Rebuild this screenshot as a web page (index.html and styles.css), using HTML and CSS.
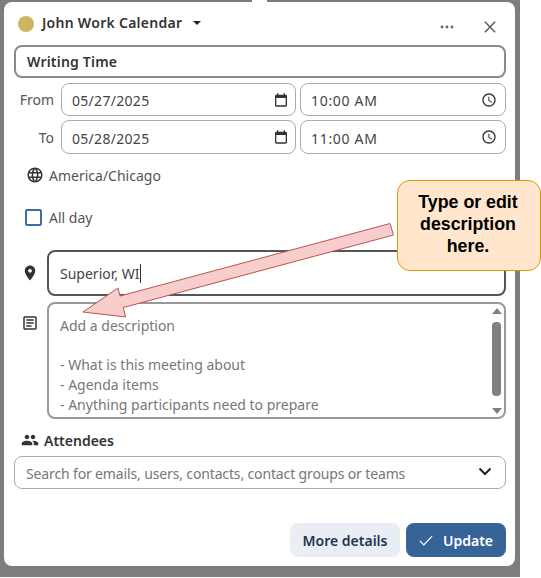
FILE: index.html
```html
<!DOCTYPE html>
<html lang="en">
<head>
  <meta charset="UTF-8" />
  <title>Edit Event</title>
  <link rel="stylesheet" href="styles.css">
</head>
<body>
  <div class="backdrop">
    <div class="beak"></div>

    <div class="panel">
      <header class="panel-head">
        <span class="cal-dot"></span>
        <span class="cal-name">John Work Calendar</span>
        <span class="caret"></span>
        <span class="head-actions">
          <svg class="more-icon" viewBox="0 0 14 4"><circle cx="2" cy="2" r="1.4"/><circle cx="7" cy="2" r="1.4"/><circle cx="12" cy="2" r="1.4"/></svg>
          <svg class="close-icon" viewBox="0 0 14 14"><path d="M1 1l12 12M13 1L1 13"/></svg>
        </span>
      </header>

      <div class="field field-title">Writing Time</div>

      <div class="date-row">
        <span class="date-label">From</span>
        <div class="field field-date">05/27/2025
          <svg class="icon" viewBox="0 0 24 24"><path d="M19 4h-1V2h-2v2H8V2H6v2H5c-1.1 0-2 .9-2 2v14c0 1.1.9 2 2 2h14c1.1 0 2-.9 2-2V6c0-1.1-.9-2-2-2zm0 16H5V9h14v11z"/></svg>
        </div>
        <div class="field field-time">10:00 AM
          <svg class="icon" viewBox="0 0 24 24"><path d="M11.99 2C6.47 2 2 6.48 2 12s4.47 10 9.99 10C17.52 22 22 17.52 22 12S17.52 2 11.99 2zM12 20c-4.42 0-8-3.58-8-8s3.58-8 8-8 8 3.58 8 8-3.58 8-8 8zm.5-13H11v6l5.25 3.15.75-1.23-4.5-2.67z"/></svg>
        </div>
      </div>

      <div class="date-row date-row-to">
        <span class="date-label">To</span>
        <div class="field field-date">05/28/2025
          <svg class="icon" viewBox="0 0 24 24"><path d="M19 4h-1V2h-2v2H8V2H6v2H5c-1.1 0-2 .9-2 2v14c0 1.1.9 2 2 2h14c1.1 0 2-.9 2-2V6c0-1.1-.9-2-2-2zm0 16H5V9h14v11z"/></svg>
        </div>
        <div class="field field-time">11:00 AM
          <svg class="icon" viewBox="0 0 24 24"><path d="M11.99 2C6.47 2 2 6.48 2 12s4.47 10 9.99 10C17.52 22 22 17.52 22 12S17.52 2 11.99 2zM12 20c-4.42 0-8-3.58-8-8s3.58-8 8-8 8 3.58 8 8-3.58 8-8 8zm.5-13H11v6l5.25 3.15.75-1.23-4.5-2.67z"/></svg>
        </div>
      </div>

      <div class="zone-row">
        <svg class="zone-icon" viewBox="0 0 24 24"><path d="M11.99 2C6.47 2 2 6.48 2 12s4.47 10 9.99 10C17.52 22 22 17.52 22 12S17.52 2 11.99 2zm6.93 6h-2.95c-.32-1.25-.78-2.45-1.38-3.56 1.84.63 3.37 1.91 4.33 3.56zM12 4.04c.83 1.2 1.48 2.53 1.91 3.96h-3.82c.43-1.43 1.08-2.76 1.91-3.96zM4.26 14C4.1 13.36 4 12.69 4 12s.1-1.36.26-2h3.38c-.08.66-.14 1.32-.14 2 0 .68.06 1.34.14 2H4.26zm.82 2h2.95c.32 1.25.78 2.45 1.38 3.56-1.84-.63-3.37-1.9-4.33-3.56zm2.95-8H5.08c.96-1.66 2.49-2.93 4.33-3.56C8.81 5.55 8.35 6.75 8.03 8zM12 19.96c-.83-1.2-1.48-2.53-1.91-3.96h3.82c-.43 1.43-1.08 2.76-1.91 3.96zM14.34 14H9.66c-.09-.66-.16-1.32-.16-2 0-.68.07-1.35.16-2h4.68c.09.65.16 1.32.16 2 0 .68-.07 1.34-.16 2zm.25 5.56c.6-1.11 1.06-2.31 1.38-3.56h2.95c-.96 1.65-2.49 2.93-4.33 3.56zM16.36 14c.08-.66.14-1.32.14-2 0-.68-.06-1.34-.14-2h3.38c.16.64.26 1.31.26 2s-.1 1.36-.26 2h-3.38z"/></svg>
        America/Chicago
      </div>

      <div class="allday-row">
        <span class="checkbox"></span>
        All day
      </div>

      <div class="icon-row">
        <svg class="row-icon" viewBox="0 0 24 24"><path d="M12 2C8.13 2 5 5.13 5 9c0 5.25 7 13 7 13s7-7.75 7-13c0-3.87-3.13-7-7-7zm0 9.5c-1.38 0-2.5-1.12-2.5-2.5s1.12-2.5 2.5-2.5 2.5 1.12 2.5 2.5-1.12 2.5-2.5 2.5z"/></svg>
        <div class="field field-location"><span class="location-text">Superior, WI</span></div>
      </div>

      <div class="icon-row icon-row-desc">
        <svg class="row-icon" viewBox="0 0 24 24"><path d="M19 5v14H5V5h14m0-2H5c-1.1 0-2 .9-2 2v14c0 1.1.9 2 2 2h14c1.1 0 2-.9 2-2V5c0-1.1-.9-2-2-2z"/><path d="M14 17H7v-2h7v2zm3-4H7v-2h10v2zm0-4H7V7h10v2z"/></svg>
        <div class="field field-desc">
          <div class="desc-text">
            <p>Add a description</p>
            <p>&nbsp;</p>
            <p>- What is this meeting about</p>
            <p>- Agenda items</p>
            <p>- Anything participants need to prepare</p>
          </div>
          <div class="scrollbar">
            <span class="scroll-up"></span>
            <span class="scroll-thumb"></span>
            <span class="scroll-down"></span>
          </div>
        </div>
      </div>

      <div class="attendees-label">
        <svg class="people-icon" viewBox="0 0 24 24"><path d="M16 11c1.66 0 2.99-1.34 2.99-3S17.66 5 16 5c-1.66 0-3 1.34-3 3s1.34 3 3 3zm-8 0c1.66 0 2.99-1.34 2.99-3S9.66 5 8 5C6.34 5 5 6.34 5 8s1.34 3 3 3zm0 2c-2.33 0-7 1.17-7 3.5V19h14v-2.5c0-2.33-4.67-3.5-7-3.5zm8 0c-.29 0-.62.02-.97.05 1.16.84 1.97 1.97 1.97 3.45V19h6v-2.5c0-2.33-4.67-3.5-7-3.5z"/></svg>
        Attendees
      </div>

      <div class="field field-search">
        Search for emails, users, contacts, contact groups or teams
        <svg class="chevron" viewBox="0 0 14 9"><path d="M1.5 1.5L7 7l5.5-5.5"/></svg>
      </div>

      <footer class="panel-foot">
        <button class="btn btn-light">More details</button>
        <button class="btn btn-primary">
          <svg class="check-icon" viewBox="0 0 16 12"><path d="M1 6.5L5.5 11 15 1"/></svg>
          Update
        </button>
      </footer>
    </div>
  </div>

  <!-- annotation on top of the screenshot -->
  <svg class="arrow" viewBox="0 0 541 578">
    <polygon points="390,223.5 120,296 118,288 83,312 125.5,317 123.3,307.5 393.5,235"/>
  </svg>
  <div class="callout">Type or edit description here.</div>
</body>
</html>
```

FILE: styles.css
```css
* { box-sizing: border-box; }

body {
  margin: 0;
  position: relative;
  width: 541px;
  height: 578px;
  background: #fff;
  font-family: "Noto Sans", "Open Sans", sans-serif;
  font-size: 14px;
  color: #444;
  overflow: hidden;
}

.backdrop {
  position: relative;
  width: 520px;
  height: 577px;
  padding: 2px 5px 11px 4px;
  background: #7d7d7d;
}

.beak {
  position: absolute;
  top: 0;
  left: 252px;
  width: 15px;
  height: 2px;
  background: #fff;
}

.panel {
  height: 100%;
  padding: 8px 9px 9px 10px;
  display: flex;
  flex-direction: column;
  background: #fff;
  border-radius: 8px;
}

/* Header */
.panel-head {
  height: 26px;
  padding-left: 4px;
  display: flex;
  align-items: center;
}

.cal-dot {
  width: 16px;
  height: 16px;
  margin-top: 1px;
  border-radius: 50%;
  background: #cfb464;
}

.cal-name {
  margin-left: 8px;
  margin-top: -2px;
  font-size: 14px;
  font-weight: 600;
  letter-spacing: 0.28px;
  color: #333;
}

.caret {
  margin-left: 11px;
  border-left: 4.5px solid transparent;
  border-right: 4.5px solid transparent;
  border-top: 4.5px solid #222;
}

.head-actions {
  margin-left: auto;
  margin-top: 8px;
  padding-right: 10px;
  display: flex;
  align-items: center;
  gap: 30px;
}

.more-icon {
  width: 14px;
  height: 4px;
  fill: #666;
}

.close-icon {
  width: 12px;
  height: 12px;
  fill: none;
  stroke: #555;
  stroke-width: 1.6;
}

/* Fields */
.field {
  display: flex;
  align-items: center;
  background: #fff;
  border: 1px solid #aaa;
  border-radius: 8px;
  color: #444;
}

.field-title {
  height: 33px;
  margin-top: 9px;
  padding-left: 11px;
  border: 2px solid #8a8a8a;
  font-weight: 600;
  letter-spacing: 0.2px;
  color: #333;
}

.date-row {
  margin-top: 5px;
  display: flex;
  align-items: center;
}

.date-row-to {
  margin-top: 4px;
}

.date-row-to .field {
  height: 34px;
}

.date-label {
  width: 40px;
  text-align: right;
  margin-right: 7px;
  color: #555;
}

.field-date,
.field-time {
  height: 33px;
  padding: 2px 8px 0 10px;
  justify-content: space-between;
  letter-spacing: 0.3px;
}

.field-date {
  width: 235px;
  margin-right: 4px;
  padding-right: 6px;
}

.field-time {
  width: 206px;
  letter-spacing: 0.7px;
}

.icon {
  width: 16px;
  height: 16px;
  margin-top: -2px;
  fill: #333;
}

.zone-row {
  height: 22px;
  margin-top: 10px;
  padding-left: 12px;
  display: flex;
  align-items: center;
  gap: 5px;
  color: #555;
}

.zone-icon {
  width: 18px;
  height: 18px;
  fill: #333;
}

.allday-row {
  height: 18px;
  margin-top: 22px;
  padding-left: 11px;
  display: flex;
  align-items: center;
  gap: 7px;
  color: #555;
}

.checkbox {
  width: 17px;
  height: 17px;
  border: 2px solid #3b6ea5;
  border-radius: 2px;
}

.icon-row {
  margin-top: 24px;
  display: flex;
  align-items: center;
}

.row-icon {
  width: 18px;
  height: 18px;
  margin-left: 7px;
  margin-right: 8px;
  flex: none;
  fill: #333;
}

.field-location {
  flex: 1;
  height: 46px;
  padding-left: 11px;
  border: 2px solid #555;
  color: #444;
}

.location-text {
  padding-right: 1px;
  border-right: 1px solid #333;
}

.icon-row-desc {
  margin-top: 6px;
  align-items: flex-start;
}

.icon-row-desc .row-icon {
  margin-top: 12px;
}

.field-desc {
  flex: 1;
  height: 117px;
  padding: 12px 2px 4px 11px;
  align-items: stretch;
  justify-content: space-between;
  border: 2px solid #999;
}

.desc-text {
  color: #777;
  line-height: 19.7px;
}

.desc-text p {
  margin: 0;
}

.scrollbar {
  width: 11px;
  margin-top: -8px;
  margin-bottom: -1px;
  display: flex;
  flex-direction: column;
  align-items: center;
  justify-content: space-between;
}

.scroll-up {
  border-left: 5px solid transparent;
  border-right: 5px solid transparent;
  border-bottom: 6px solid #808080;
}

.scroll-thumb {
  width: 9px;
  height: 74px;
  margin-bottom: 4px;
  background: #808080;
  border-radius: 4px;
}

.scroll-down {
  border-left: 5px solid transparent;
  border-right: 5px solid transparent;
  border-top: 6px solid #808080;
}

.attendees-label {
  height: 20px;
  margin-top: 11px;
  padding-left: 7px;
  display: flex;
  align-items: center;
  gap: 5px;
  font-weight: 600;
  color: #333;
}

.people-icon {
  width: 18px;
  height: 18px;
  fill: #333;
}

.field-search {
  height: 33px;
  margin-top: 6px;
  padding: 2px 13px 0 11px;
  justify-content: space-between;
  letter-spacing: -0.14px;
  color: #777;
}

.chevron {
  width: 14px;
  height: 9px;
  margin-top: -4px;
  fill: none;
  stroke: #222;
  stroke-width: 2;
}

/* Footer */
.panel-foot {
  margin-top: auto;
  display: flex;
  justify-content: flex-end;
  gap: 6px;
}

.btn {
  height: 34px;
  border: 0;
  border-radius: 8px;
  font-family: inherit;
  font-size: 14px;
  font-weight: 600;
}

.btn-light {
  width: 110px;
  background: #e8eef4;
  color: #1f3550;
}

.btn-primary {
  width: 100px;
  display: flex;
  align-items: center;
  justify-content: center;
  gap: 10px;
  background: #366499;
  color: #fff;
}

.check-icon {
  width: 14px;
  height: 11px;
  fill: none;
  stroke: #fff;
  stroke-width: 1.4;
}

/* Annotation */
.arrow {
  position: absolute;
  top: 0;
  left: 0;
  width: 541px;
  height: 578px;
  fill: #f8cecc;
  stroke: #b85450;
  stroke-width: 1;
}

.callout {
  position: absolute;
  top: 180px;
  left: 397px;
  width: 144px;
  height: 91px;
  padding: 0 13px 4px 11px;
  display: flex;
  align-items: center;
  text-align: center;
  background: #ffe6cc;
  border: 1px solid #d79b00;
  border-radius: 13px;
  font-family: "Liberation Sans", Arial, sans-serif;
  font-size: 17.8px;
  font-weight: 700;
  line-height: 22px;
  color: #000;
}
```
